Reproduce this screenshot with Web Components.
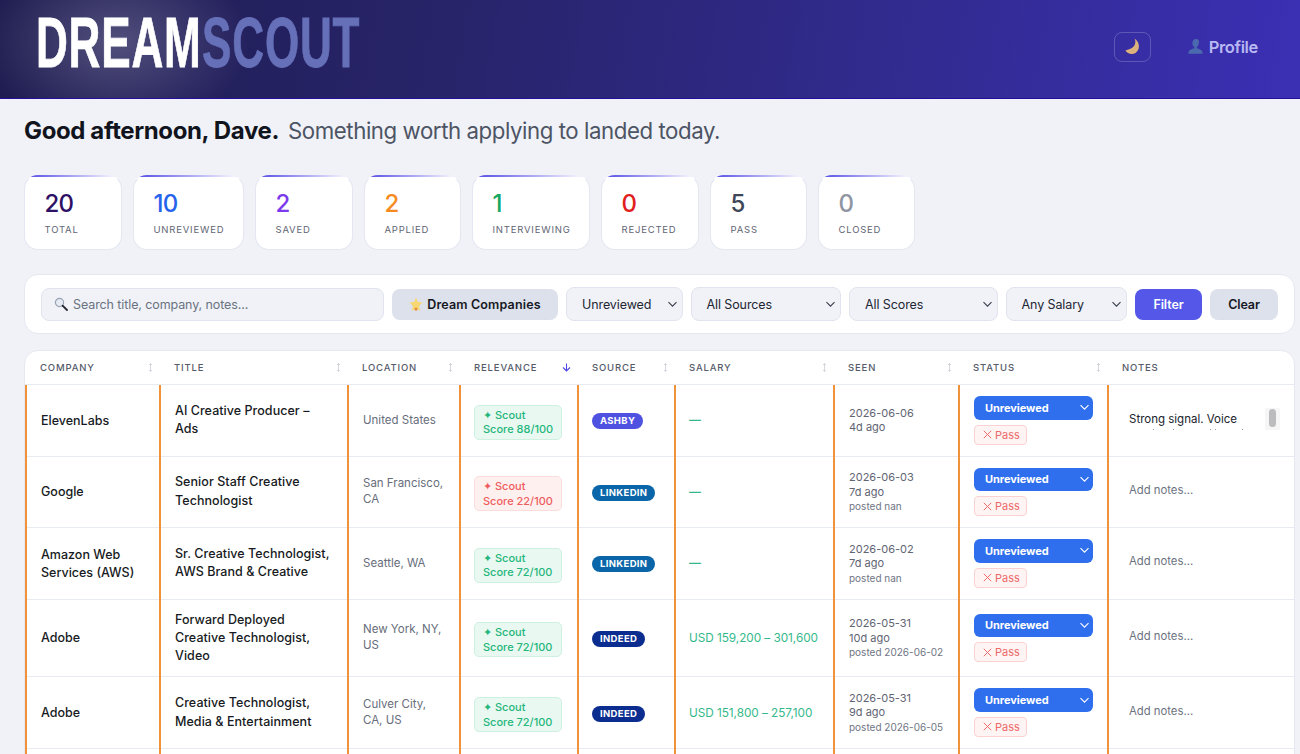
<!DOCTYPE html>
<html lang="en">
<head>
<meta charset="utf-8">
<title>DreamScout</title>
<style>
  html, body { margin: 0; height: 754px; overflow: hidden; }
  body {
    background: #f0f2f8;
    color: #111827;
    font-family: Inter, "Noto Sans", "Liberation Sans", sans-serif;
    letter-spacing: -0.02em;
  }
</style>
</head>
<body>
<dream-header></dream-header>
<dream-page>
  <dream-greeting name="Dave" message="Something worth applying to landed today."></dream-greeting>
  <stat-row>
    <stat-card value="20" label="Total" color="#2e1065" w="98"></stat-card>
    <stat-card value="10" label="Unreviewed" color="#2563eb" w="111"></stat-card>
    <stat-card value="2" label="Saved" color="#7c3aed" w="98"></stat-card>
    <stat-card value="2" label="Applied" color="#f58a1f" w="97"></stat-card>
    <stat-card value="1" label="Interviewing" color="#16a765" w="118"></stat-card>
    <stat-card value="0" label="Rejected" color="#e11d1d" w="98"></stat-card>
    <stat-card value="5" label="Pass" color="#3f4657" w="97"></stat-card>
    <stat-card value="0" label="Closed" color="#8f95a3" w="97"></stat-card>
  </stat-row>
  <filter-bar>
    <filter-select w="116.5">Unreviewed</filter-select>
    <filter-select w="150.5">All Sources</filter-select>
    <filter-select w="148.5">All Scores</filter-select>
    <filter-select w="121.5">Any Salary</filter-select>
  </filter-bar>
  <job-table>
    <job-row company="ElevenLabs" title="AI Creative Producer – Ads" location="United States" score="88" source="ASHBY" seen="2026-06-06" ago="4d ago" note="Strong signal. Voice"></job-row>
    <job-row company="Google" title="Senior Staff Creative Technologist" location="San Francisco, CA" score="22" source="LINKEDIN" seen="2026-06-03" ago="7d ago" posted="posted nan"></job-row>
    <job-row company="Amazon Web Services (AWS)" title="Sr. Creative Technologist, AWS Brand &amp; Creative" location="Seattle, WA" score="72" source="LINKEDIN" seen="2026-06-02" ago="7d ago" posted="posted nan"></job-row>
    <job-row company="Adobe" title="Forward Deployed Creative Technologist, Video" location="New York, NY, US" score="72" source="INDEED" salary="USD 159,200 – 301,600" seen="2026-05-31" ago="10d ago" posted="posted 2026-06-02"></job-row>
    <job-row company="Adobe" title="Creative Technologist, Media &amp; Entertainment" location="Culver City, CA, US" score="72" source="INDEED" salary="USD 151,800 – 257,100" seen="2026-05-31" ago="9d ago" posted="posted 2026-06-05"></job-row>
    <job-row blank></job-row>
  </job-table>
</dream-page>

<script>
const COLUMNS = '134px 188px 112px 118px 97px 159px 125px 149px 1fr'

class DreamHeader extends HTMLElement {
  constructor() {
    super()
    this.attachShadow({mode: 'open'}).innerHTML = `
    <style>
    :host {
      display: flex;
      align-items: center;
      justify-content: space-between;
      box-sizing: border-box;
      height: 99px;
      padding: 0 42px 5px 36px;
      border-bottom: 1px solid #230f9c;
      background:
        radial-gradient(ellipse 135px 90px at 115px 42px, rgba(255,255,255,.22), rgba(255,255,255,0) 100%),
        linear-gradient(100deg, #1e1c50 0%, #28246a 35%, #332c96 75%, #3b2fb4 100%);
    }
    .logo {
      display: block;
      width: 322px;
      margin-bottom: 7px;
      white-space: nowrap;
      font: bold 70px/1 "Liberation Sans Narrow", "Liberation Sans", sans-serif;
      letter-spacing: 1.2px;
      transform: scaleX(.63);
      transform-origin: left center;
      color: #fff;
      -webkit-text-stroke: .8px currentColor;
    }
    .logo span { color: #6570b8; margin-left: 1px; }
    .right { display: flex; align-items: center; gap: 37px; }
    .theme {
      display: flex;
      align-items: center;
      justify-content: center;
      box-sizing: border-box;
      width: 37px;
      height: 30px;
      border: 1px solid rgba(255,255,255,.2);
      border-radius: 8px;
    }
    .profile {
      display: flex;
      align-items: center;
      gap: 5px;
      font-size: 16.5px;
      font-weight: 600;
      letter-spacing: -.35px;
      color: #b8b8f2;
    }
    </style>
    <div class="logo">DREAM<span>SCOUT</span></div>
    <div class="right">
      <div class="theme">
        <svg width="17" height="17" viewBox="0 0 17 17"><path d="M10.6 .6C12.7 5.5 10.6 11 1.4 12.4 3.4 15.8 8 17 11.6 14.9 16 12.2 16.4 4.6 10.6 .6Z" fill="#dcb17c"/></svg>
      </div>
      <div class="profile">
        <svg width="16" height="17" viewBox="0 0 17 17"><path d="M8.5 .5C6 .5 4.6 2.4 4.6 4.8c0 2 .9 3.5 2 4.3v1.2c-1.9.8-5.2 1.6-5.8 3.2-.3.8-.4 2-.4 2.6h15.2c0-.7-.1-1.8-.4-2.6-.6-1.6-3.9-2.4-5.8-3.2V9.1c1.100-.8 2-2.300 2-4.300C12.400 2.400 11 .5 8.500 .5Z" fill="#4a69ae"/></svg>
        Profile
      </div>
    </div>
    `
  }
}

class DreamPage extends HTMLElement {
  constructor() {
    super()
    this.attachShadow({mode: 'open'}).innerHTML = `
    <style>
    :host {
      display: flex;
      flex-direction: column;
      padding: 17px 5px 0 24px;
    }
    </style>
    <slot></slot>
    `
  }
}

class DreamGreeting extends HTMLElement {
  connectedCallback() {
    this.attachShadow({mode: 'open'}).innerHTML = `
    <style>
    :host {
      display: flex;
      align-items: baseline;
      gap: 9px;
      height: 29px;
      line-height: 29px;
      white-space: nowrap;
    }
    b { font-size: 24px; font-weight: 700; letter-spacing: -.38px; color: #11141d; }
    span { font-size: 22.250px; letter-spacing: -.44px; color: #4d5464; }
    </style>
    <b>Good afternoon, ${this.getAttribute('name')}.</b>
    <span>${this.getAttribute('message')}</span>
    `
  }
}

class StatRow extends HTMLElement {
  constructor() {
    super()
    this.attachShadow({mode: 'open'}).innerHTML = `
    <style>
    :host { display: flex; gap: 11px; margin-top: 30px; }
    </style>
    <slot></slot>
    `
  }
}

class StatCard extends HTMLElement {
  connectedCallback() {
    this.attachShadow({mode: 'open'}).innerHTML = `
    <style>
    :host {
      display: block;
      box-sizing: border-box;
      width: ${this.getAttribute('w')}px;
      height: 75px;
      padding: 14px 0 0 19.500px;
      overflow: hidden;
      background: #fff;
      border: 1px solid #e4e7f1;
      border-top-color: transparent;
      border-radius: 14px;
      background-image: linear-gradient(90deg, #4f46e5, rgba(79,70,229,.08) 90%);
      background-size: 100% 2px;
      background-repeat: no-repeat;
      background-position: 0 0;
      background-origin: border-box;
    }
    .value {
      font-size: 24px;
      line-height: 28px;
      font-weight: 500;
      letter-spacing: -.7px;
      color: ${this.getAttribute('color')};
    }
    .label {
      margin-top: 5px;
      font-size: 9.500px;
      line-height: 14px;
      letter-spacing: .8px;
      text-transform: uppercase;
      color: #5f6574;
      white-space: nowrap;
    }
    </style>
    <div class="value">${this.getAttribute('value')}</div>
    <div class="label">${this.getAttribute('label')}</div>
    `
  }
}

class FilterSelect extends HTMLElement {
  connectedCallback() {
    this.attachShadow({mode: 'open'}).innerHTML = `
    <style>
    :host {
      display: flex;
      align-items: center;
      justify-content: space-between;
      box-sizing: border-box;
      flex: none;
      width: ${this.getAttribute('w')}px;
      height: 34px;
      padding: 0 4px 0 15px;
      background: #f0f2f8;
      border: 1px solid #e1e4ee;
      border-radius: 8px;
      font-size: 12.500px;
      letter-spacing: -.1px;
      color: #232733;
    }
    </style>
    <slot></slot>
    <svg width="11" height="7" viewBox="0 0 11 7"><path d="M1.500 1.200 5.500 5.200 9.500 1.200" fill="none" stroke="#3a3f4c" stroke-width="1.100"/></svg>
    `
  }
}

class FilterBar extends HTMLElement {
  constructor() {
    super()
    this.attachShadow({mode: 'open'}).innerHTML = `
    <style>
    :host {
      display: flex;
      align-items: center;
      gap: 8px;
      box-sizing: border-box;
      height: 60px;
      margin-top: 24px;
      padding: 0 16px;
      background: #fff;
      border: 1px solid #e6e8f1;
      border-radius: 14px;
    }
    .search {
      display: flex;
      align-items: center;
      gap: 5px;
      flex: 1;
      box-sizing: border-box;
      height: 33px;
      padding-left: 12px;
      background: #f0f2f8;
      border: 1px solid #e1e4ee;
      border-radius: 8px;
      font-size: 12.500px;
      letter-spacing: -.1px;
      color: #6b7280;
    }
    button {
      display: flex;
      align-items: center;
      justify-content: center;
      gap: 4px;
      flex: none;
      height: 31px;
      padding: 0;
      border: 0;
      border-radius: 8px;
      font: 600 12.500px Inter, sans-serif;
      letter-spacing: -.1px;
      background: #dde1ec;
      color: #15181f;
    }
    .dream { width: 166px; letter-spacing: .15px; }
    .apply { width: 67px; background: #5457e8; color: #fff; }
    .clear { width: 68px; }
    </style>
    <div class="search">
      <svg width="14" height="14" viewBox="0 0 14 14"><circle cx="5.500" cy="5.500" r="4.100" fill="#e5eaf3" stroke="#9aa3b2" stroke-width="1.200"/><path d="M8.600 8.600 13 13" stroke="#23262e" stroke-width="1.800" stroke-linecap="round"/></svg>
      Search title, company, notes...
    </div>
    <button class="dream">
      <svg width="14" height="15" viewBox="0 0 13 14"><path d="M6.500 .5 8.300 4.700 12.700 5.200 9.400 8.200 10.400 13 6.500 10.500 2.600 13 3.600 8.200 .3 5.200 4.700 4.700Z" fill="#f7d774"/><circle cx="6.500" cy="11.300" r="1.500" fill="#e98f3a"/></svg>
      Dream Companies
    </button>
    <slot></slot>
    <button class="apply">Filter</button>
    <button class="clear">Clear</button>
    `
  }
}

class JobTable extends HTMLElement {
  constructor() {
    super()
    const sort = `<svg class="sort" width="5" height="9" viewBox="0 0 5 9"><path d="M2.500 .5V8.500M1 2 2.500 .5 4 2M1 7 2.500 8.500 4 7" fill="none" stroke="#cfd2d9" stroke-width=".9"/></svg>`
    const down = `<svg class="sort" width="9" height="9" viewBox="0 0 9 9"><path d="M4.500 .5V8M1 4.500 4.500 8 8 4.500" fill="none" stroke="#4f46e5" stroke-width="1.100"/></svg>`
    const heads = [['Company', sort], ['Title', sort], ['Location', sort], ['Relevance', down], ['Source', sort], ['Salary', sort], ['Seen', sort], ['Status', sort], ['Notes', '']]
    this.attachShadow({mode: 'open'}).innerHTML = `
    <style>
    :host {
      display: block;
      margin-top: 16px;
      overflow: hidden;
      background: #fff;
      border: 1px solid #e6e8f1;
      border-radius: 14px 14px 0 0;
    }
    .head {
      display: grid;
      grid-template-columns: ${COLUMNS};
      height: 33px;
      border-bottom: 1px solid #e8eaf2;
    }
    .head div {
      display: flex;
      align-items: center;
      justify-content: space-between;
      padding: 0 6px 0 15px;
      font-size: 9.500px;
      font-weight: 500;
      letter-spacing: .85px;
      text-transform: uppercase;
      color: #555b6a;
    }
    </style>
    <div class="head">
      ${heads.map(([name, icon]) => `<div>${name}${icon}</div>`).join('')}
    </div>
    <slot></slot>
    `
  }
}

class JobRow extends HTMLElement {
  connectedCallback() {
    const a = name => this.getAttribute(name) || ''
    const score = Number(a('score'))
    const good = score >= 50
    const pills = {ASHBY: '#4f52e0', LINKEDIN: '#0a66a8', INDEED: '#0b2d8f'}
    const note = a('note')
    this.attachShadow({mode: 'open'}).innerHTML = `
    <style>
    :host {
      display: grid;
      grid-template-columns: ${COLUMNS};
      box-shadow: inset 0 -1px 0 #e8eaf2;
      ${this.hasAttribute('blank') ? 'min-height: 60px;' : ''}
    }
    .cell {
      display: flex;
      align-items: center;
      box-sizing: border-box;
      min-width: 0;
      padding: 11px 12px 12px 14px;
      border-left: 2px solid #f0923a;
    }
    .tight { padding-left: 13px; }
    .company { font-size: 12.500px; font-weight: 550; line-height: 18px; letter-spacing: 0; color: #171a22; padding-top: 12px; }
    .title { font-size: 12.500px; font-weight: 550; line-height: 18.330px; letter-spacing: .05px; color: #171a22; }
    .location { font-size: 11.500px; line-height: 15.500px; color: #676d7b; letter-spacing: 0; }
    .score {
      box-sizing: border-box;
      width: 88px;
      margin-top: 4px;
      padding: 2px 0 2px 8px;
      background: ${good ? '#e9f9f2' : '#fff0f0'};
      border: 1px solid ${good ? '#cdf0e1' : '#fbdcdc'};
      border-radius: 5px;
      font-size: 11px;
      font-weight: 500;
      line-height: 14.500px;
      letter-spacing: 0;
      color: ${good ? '#25b67c' : '#ee5d5d'};
    }
    .pill {
      margin-top: 2px;
      padding: 0 8px;
      height: 16px;
      line-height: 16px;
      border-radius: 9px;
      font-size: 9.500px;
      font-weight: 700;
      letter-spacing: .35px;
      color: #fff;
      background: ${pills[a('source')]};
    }
    .salary { font-size: 11.800px; letter-spacing: -.05px; color: #35b98b; white-space: nowrap; }
    .dash { font-weight: 700; }
    .seen { font-size: 11px; line-height: 14.500px; letter-spacing: 0; color: #5f6573; }
    .seen small { display: block; font-size: 10px; color: #6f7583; white-space: nowrap; }
    .status { display: flex; flex-direction: column; align-items: flex-start; gap: 5px; }
    .state {
      display: flex;
      align-items: center;
      justify-content: space-between;
      box-sizing: border-box;
      width: 118.500px;
      height: 23.500px;
      padding: 0 3px 0 11px;
      background: #2f6fed;
      border-radius: 6px;
      font-size: 11px;
      font-weight: 700;
      letter-spacing: -.05px;
      color: #fff;
    }
    .pass {
      box-sizing: border-box;
      display: flex;
      align-items: center;
      gap: 3px;
      width: 53px;
      height: 20px;
      padding-left: 8px;
      background: #fff4f4;
      border: 1px solid #fbd2d2;
      border-radius: 4px;
      font-size: 11px;
      letter-spacing: 0;
      color: #ec6a6a;
    }
    .notes { padding-left: 20px; padding-right: 14px; font-size: 11.300px; letter-spacing: 0; color: #6b7280; }
    .add { margin-top: -4px; }
    .note-box { display: flex; align-items: flex-start; justify-content: space-between; width: 100%; margin-top: -3px; }
    .note-text { height: 22px; overflow: hidden; padding-top: 1px; box-sizing: border-box; font-size: 11.500px; line-height: 20px; color: #20232c; white-space: nowrap; }
    .specks { display: block; }
    .bar { box-sizing: border-box; width: 15px; height: 22px; padding: 1px 4px; background: #f6f6f7; }
    .bar i { display: block; height: 18px; border-radius: 4px; background: #bcbcbf; }
    </style>
    ${this.hasAttribute('blank') ? '<div class="cell"></div>'.repeat(9) : `
    <div class="cell company">${a('company')}</div>
    <div class="cell title">${a('title')}</div>
    <div class="cell location">${a('location')}</div>
    <div class="cell tight"><div class="score">✦ Scout<br>Score ${score}/100</div></div>
    <div class="cell tight"><div class="pill">${a('source')}</div></div>
    <div class="cell tight salary">${a('salary') || '<span class="dash">—</span>'}</div>
    <div class="cell seen"><div>${a('seen')}<br>${a('ago')}${a('posted') ? `<small>${a('posted')}</small>` : ''}</div></div>
    <div class="cell"><div class="status">
      <div class="state">Unreviewed
        <svg width="11" height="7" viewBox="0 0 11 7"><path d="M1.500 1.200 5.500 5.200 9.500 1.200" fill="none" stroke="#fff" stroke-width="1.100"/></svg>
      </div>
      <div class="pass">
        <svg width="9" height="9" viewBox="0 0 9 9"><path d="M.8 .8 8.200 8.200M8.200 .8 .8 8.200" stroke="#ec6a6a" stroke-width="1"/></svg>
        Pass
      </div>
    </div></div>
    <div class="cell notes">
      ${note ? `<div class="note-box">
        <div class="note-text">${note}
          <svg class="specks" width="120" height="2"><g fill="#9a9ca3"><rect x="24" width="1" height="2"/><rect x="44" width="1" height="2"/><rect x="81" width="1" height="2"/><rect x="86" width="1" height="2"/><rect x="113" width="1" height="2"/></g></svg>
        </div>
        <div class="bar"><i></i></div>
      </div>` : '<div class="add">Add notes...</div>'}
    </div>`}
    `
  }
}

customElements.define('dream-header', DreamHeader)
customElements.define('dream-page', DreamPage)
customElements.define('dream-greeting', DreamGreeting)
customElements.define('stat-row', StatRow)
customElements.define('stat-card', StatCard)
customElements.define('filter-select', FilterSelect)
customElements.define('filter-bar', FilterBar)
customElements.define('job-table', JobTable)
customElements.define('job-row', JobRow)
</script>
</body>
</html>
